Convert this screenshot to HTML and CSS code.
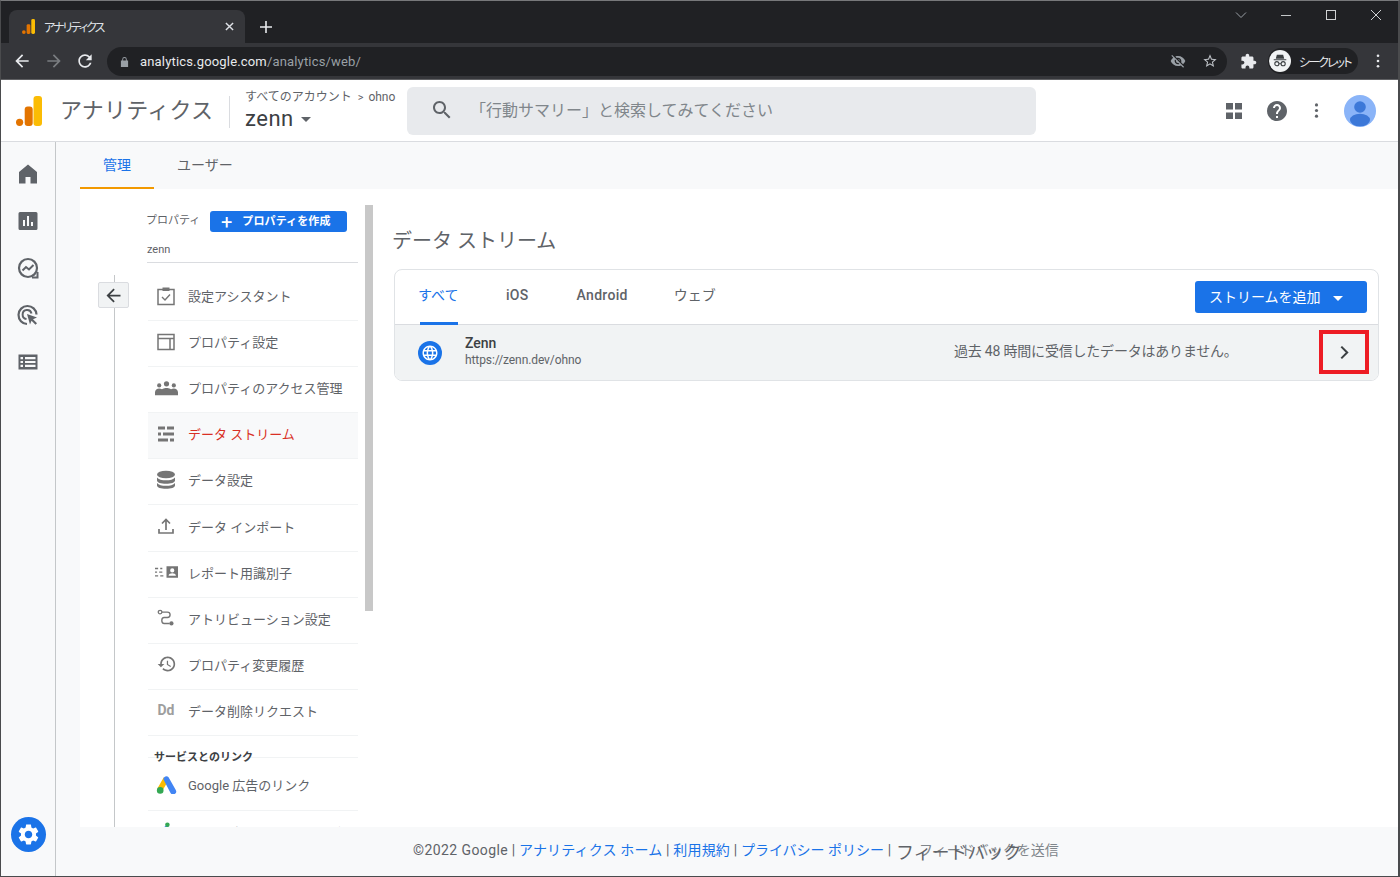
FILE: index.html
```html
<!DOCTYPE html>
<html lang="ja">
<head>
    <meta charset="UTF-8">
    <title>アナリティクス</title>
    <link rel="stylesheet" href="styles.css">
</head>
<body>
<div class="window">

<!-- browser chrome -->
<div class="tabstrip">
    <div class="tab">
        <svg class="tab-logo" viewBox="0 0 14 16"><rect x="10" y="0" width="4" height="16" rx="1.5" fill="#fbbc04"/><rect x="5" y="5.5" width="4" height="10.5" rx="1.5" fill="#e37400"/><circle cx="2" cy="14" r="2" fill="#e37400"/></svg>
        <span class="tab-title">アナリティクス</span>
        <svg class="tab-close" viewBox="0 0 10 10"><path d="M1 1l8 8M9 1l-8 8" stroke="#dee1e6" stroke-width="1.6"/></svg>
    </div>
    <svg class="new-tab" viewBox="0 0 12 12"><path d="M6 0v12M0 6h12" stroke="#e8eaed" stroke-width="1.6"/></svg>
    <div class="window-controls">
        <svg viewBox="0 0 12 12" class="win-chevron"><path d="M1 3.5l5 5 5-5" fill="none" stroke="#9aa0a6" stroke-width="1"/></svg>
        <svg viewBox="0 0 12 12"><path d="M1 6.5h10" stroke="#c4c7c9" stroke-width="1"/></svg>
        <svg viewBox="0 0 12 12"><rect x="1.5" y="1.5" width="9" height="9" fill="none" stroke="#d0d2d4" stroke-width="1"/></svg>
        <svg viewBox="0 0 12 12"><path d="M1 1l10 10M11 1L1 11" stroke="#d0d2d4" stroke-width="1"/></svg>
    </div>
</div>
<div class="toolbar">
    <svg class="tool-icon" viewBox="0 0 24 24"><path fill="#e8eaed" d="M20 11H7.83l5.59-5.59L12 4l-8 8 8 8 1.41-1.41L7.83 13H20v-2z"/></svg>
    <svg class="tool-icon" viewBox="0 0 24 24"><path fill="#7a7d81" d="M12 4l-1.41 1.41L16.17 11H4v2h12.17l-5.58 5.59L12 20l8-8z"/></svg>
    <svg class="tool-icon" viewBox="0 0 24 24"><path fill="#e8eaed" d="M17.65 6.35C16.2 4.9 14.21 4 12 4c-4.42 0-7.99 3.58-7.99 8s3.57 8 7.99 8c3.73 0 6.84-2.55 7.73-6h-2.08c-.82 2.33-3.04 4-5.65 4-3.31 0-6-2.69-6-6s2.69-6 6-6c1.66 0 3.14.69 4.22 1.78L13 11h7V4l-2.35 2.35z"/></svg>
    <div class="omnibox">
        <svg class="lock" viewBox="0 0 10 12"><path fill="#9aa0a6" d="M2.5 5V3.5a2.5 2.5 0 015 0V5H9v7H1V5zm1 0h3V3.5a1.5 1.5 0 00-3 0z"/></svg>
        <span class="url"><b>analytics.google.com</b>/analytics/web/</span>
        <svg class="omni-icon eye" viewBox="0 0 24 24"><path fill="#9aa0a6" d="M12 7c2.76 0 5 2.24 5 5 0 .65-.13 1.26-.36 1.83l2.92 2.92c1.51-1.26 2.7-2.89 3.43-4.75-1.73-4.39-6-7.5-11-7.5-1.4 0-2.74.25-3.98.7l2.16 2.16C10.74 7.13 11.35 7 12 7zM2 4.27l2.28 2.28.46.46C3.08 8.3 1.78 10.02 1 12c1.73 4.39 6 7.5 11 7.5 1.55 0 3.03-.3 4.38-.84l.42.42L19.73 22 21 20.73 3.27 3 2 4.27zM7.53 9.8l1.55 1.55c-.05.21-.08.43-.08.65 0 1.66 1.34 3 3 3 .22 0 .44-.03.65-.08l1.55 1.55c-.67.33-1.41.53-2.2.53-2.76 0-5-2.24-5-5 0-.79.2-1.53.53-2.2zm4.31-.78l3.15 3.15.02-.16c0-1.66-1.34-3-3-3l-.17.01z"/></svg>
        <svg class="omni-icon" viewBox="0 0 24 24"><path fill="#bdc1c6" d="M22 9.24l-7.19-.62L12 2 9.19 8.63 2 9.24l5.46 4.73L5.82 21 12 17.27 18.18 21l-1.63-7.03L22 9.24zM12 15.4l-3.76 2.27 1-4.28-3.32-2.88 4.38-.38L12 6.1l1.71 4.04 4.38.38-3.32 2.88 1 4.28L12 15.4z"/></svg>
    </div>
    <svg class="ext-icon" viewBox="0 0 24 24"><path fill="#e8eaed" d="M20.5 11H19V7c0-1.1-.9-2-2-2h-4V3.5C13 2.12 11.88 1 10.5 1S8 2.12 8 3.5V5H4c-1.1 0-1.99.9-1.99 2v3.8H3.5c1.49 0 2.7 1.21 2.7 2.7s-1.21 2.7-2.7 2.7H2V20c0 1.1.9 2 2 2h3.8v-1.5c0-1.49 1.21-2.7 2.7-2.7 1.49 0 2.7 1.21 2.7 2.7V22H17c1.1 0 2-.9 2-2v-4h1.5c1.38 0 2.5-1.12 2.5-2.5S21.88 11 20.5 11z"/></svg>
    <div class="incognito">
        <span class="incognito-badge">
            <svg viewBox="0 0 20 20"><path fill="#3c4043" d="M6.5 3h7l1.2 4.5H5.300zM3 8h14v1.200H3z"/><circle cx="6.500" cy="13" r="2.300" fill="none" stroke="#3c4043" stroke-width="1.200"/><circle cx="13.500" cy="13" r="2.300" fill="none" stroke="#3c4043" stroke-width="1.200"/><path d="M8.800 13h2.400" stroke="#3c4043" stroke-width="1"/></svg>
        </span>
        <span class="incognito-label">シークレット</span>
    </div>
    <svg class="kebab" viewBox="0 0 4 16"><circle cx="2" cy="2" r="1.500" fill="#e8eaed"/><circle cx="2" cy="8" r="1.500" fill="#e8eaed"/><circle cx="2" cy="14" r="1.500" fill="#e8eaed"/></svg>
</div>

<!-- analytics header -->
<header class="app-header">
    <svg class="logo" viewBox="0 0 26 30"><rect x="17.500" y="0" width="8.500" height="30" rx="3" fill="#fbbc04"/><rect x="8.700" y="10.500" width="8" height="19.500" rx="3" fill="#e37400"/><circle cx="3.600" cy="26.300" r="3.600" fill="#e37400"/></svg>
    <div class="product-name">アナリティクス</div>
    <div class="account">
        <div class="crumbs">すべてのアカウント <span class="crumb-sep">&gt;</span> ohno</div>
        <div class="property-name">zenn <span class="caret"></span></div>
    </div>
    <div class="search">
        <svg viewBox="0 0 24 24"><path fill="#5f6368" d="M15.500 14h-.79l-.28-.27C15.410 12.590 16 11.110 16 9.500 16 5.910 13.090 3 9.500 3S3 5.910 3 9.500 5.910 16 9.500 16c1.610 0 3.090-.59 4.230-1.570l.27.28v.79l5 4.990L20.490 19l-4.990-5zm-6 0C7.010 14 5 11.990 5 9.500S7.010 5 9.500 5 14 7.010 14 9.500 11.990 14 9.500 14z"/></svg>
        <span>「行動サマリー」と検索してみてください</span>
    </div>
    <div class="header-actions">
        <svg class="apps" viewBox="0 0 16 16"><path fill="#5f6368" d="M0 0h7v6.500H0zM9 0h7v6.500H9zM0 9.500h7V16H0zM9 9.500h7V16H9z"/></svg>
        <svg class="help" viewBox="2 2 20 20"><path fill="#5f6368" d="M12 2C6.480 2 2 6.480 2 12s4.480 10 10 10 10-4.480 10-10S17.520 2 12 2zm1 17h-2v-2h2v2zm2.070-7.750l-.9.920C13.450 12.900 13 13.500 13 15h-2v-.5c0-1.100.450-2.100 1.170-2.830l1.240-1.260c.370-.36.590-.86.590-1.410 0-1.100-.9-2-2-2s-2 .9-2 2H8c0-2.210 1.790-4 4-4s4 1.790 4 4c0 .880-.36 1.680-.93 2.250z"/></svg>
        <svg class="more" viewBox="0 0 4 16"><circle cx="2" cy="2" r="1.700" fill="#5f6368"/><circle cx="2" cy="8" r="1.700" fill="#5f6368"/><circle cx="2" cy="14" r="1.700" fill="#5f6368"/></svg>
        <svg class="avatar" viewBox="0 0 32 32"><circle cx="16" cy="16" r="16" fill="#8ab4f8"/><circle cx="16" cy="12" r="5.800" fill="#3c78d8"/><ellipse cx="16" cy="25" rx="10" ry="6.300" fill="#3c78d8"/></svg>
    </div>
</header>

<div class="app-body">
    <!-- left rail -->
    <nav class="rail">
        <svg viewBox="0 0 24 24"><path fill="#5f6368" d="M12 2.500L3 10v11.500h6.500V15h5v6.500H21V10z"/></svg>
        <svg viewBox="0 0 24 24"><path fill="#5f6368" fill-rule="evenodd" d="M4 3h16a1.500 1.500 0 011.500 1.500v15A1.500 1.500 0 0120 21H4a1.500 1.500 0 01-1.500-1.500v-15A1.500 1.500 0 014 3zm3 8v6h2v-6zm4-4v10h2V7zm4 6v4h2v-4z"/></svg>
        <svg viewBox="0 0 24 24"><circle cx="12" cy="12" r="9" fill="none" stroke="#5f6368" stroke-width="2.200"/><path d="M6.500 14.500l3.500-3.500 3 2.500 4.500-4.500" fill="none" stroke="#5f6368" stroke-width="2"/><path d="M16 21.500h5.500V16" fill="none" stroke="#5f6368" stroke-width="2"/></svg>
        <svg viewBox="0 0 24 24"><path d="M11 21a9 9 0 119.500-9.500" fill="none" stroke="#5f6368" stroke-width="2.200"/><path d="M10.500 16a4.500 4.500 0 115-5.500" fill="none" stroke="#5f6368" stroke-width="2"/><path fill="#5f6368" d="M11 11l10 3.500-4 1.800 4 4-1.500 1.500-4-4L14 21.500z"/></svg>
        <svg viewBox="0 0 24 24"><path fill="#5f6368" d="M2.500 4.500h19v15h-19zM4.500 7v2.200h2.500V7zm4.500 0v2.200h10.500V7zM4.500 10.900v2.200h2.500v-2.200zm4.500 0v2.200h10.500v-2.200zM4.500 14.800V17h2.500v-2.200zm4.500 0V17h10.500v-2.200z" fill-rule="evenodd"/></svg>
        <div class="rail-spacer"></div>
        <span class="gear">
            <svg viewBox="0 0 24 24"><path fill="#fff" d="M19.140 12.940c.04-.3.060-.61.060-.94 0-.32-.02-.64-.07-.94l2.030-1.580c.18-.14.230-.41.120-.61l-1.920-3.320c-.12-.22-.37-.29-.59-.22l-2.390.96c-.5-.38-1.030-.7-1.620-.94l-.36-2.540c-.04-.24-.24-.41-.48-.41h-3.840c-.24 0-.43.170-.47.410l-.36 2.540c-.59.240-1.130.570-1.620.940l-2.390-.96c-.22-.08-.47 0-.59.220L2.740 8.870c-.12.210-.08.470.120.610l2.030 1.580c-.05.3-.09.630-.09.940s.02.640.07.940l-2.030 1.580c-.18.140-.23.410-.12.610l1.920 3.320c.12.220.370.290.590.220l2.390-.96c.5.380 1.030.7 1.620.940l.36 2.540c.05.240.240.410.480.410h3.840c.24 0 .44-.17.470-.41l.36-2.540c.59-.24 1.130-.56 1.620-.94l2.390.96c.22.080.47 0 .59-.22l1.920-3.320c.12-.22.070-.47-.12-.61l-2.010-1.580zM12 15.600c-1.980 0-3.600-1.620-3.600-3.600s1.620-3.600 3.600-3.600 3.600 1.620 3.600 3.600-1.620 3.600-3.600 3.600z"/></svg>
        </span>
    </nav>

    <div class="content">
        <div class="page-tabs">
            <div class="page-tab active">管理</div>
            <div class="page-tab">ユーザー</div>
        </div>

        <div class="admin">
            <div class="gutter">
                <div class="back-btn">
                    <svg viewBox="0 0 24 24"><path fill="#3c4043" d="M20 11H7.830l5.590-5.590L12 4l-8 8 8 8 1.410-1.410L7.830 13H20v-2z"/></svg>
                </div>
            </div>

            <div class="panel">
                <div class="panel-head">
                    <span class="panel-label">プロパティ</span>
                    <button class="create-btn"><span class="plus">+</span><span class="create-label">プロパティを作成</span></button>
                </div>
                <div class="panel-name">zenn</div>

                <div class="menu-item">
                    <span class="menu-icon"><svg viewBox="0 0 20 20"><path d="M2 3.500h16v15H2z" fill="none" stroke="#757575" stroke-width="1.500"/><path d="M6.500 1.500h7v3.500h-7z" fill="#757575"/><path d="M6 11l3 3 5-5.500" fill="none" stroke="#757575" stroke-width="1.400"/></svg></span>
                    設定アシスタント
                </div>
                <div class="menu-item">
                    <span class="menu-icon"><svg viewBox="0 0 20 20"><path d="M2 2.500h16v15H2zM2 6.500h16M14 6.500v11" fill="none" stroke="#757575" stroke-width="1.500"/></svg></span>
                    プロパティ設定
                </div>
                <div class="menu-item">
                    <span class="menu-icon"><svg class="wide" viewBox="0 0 22 14"><g fill="#757575"><circle cx="4" cy="4.500" r="2"/><circle cx="11" cy="3" r="2.500"/><circle cx="18" cy="4.500" r="2"/><path d="M0 14v-3c0-2 2-3.500 4-3.500s3.500 1 3.500 3V14zM6 14v-3.500C6 8 8.500 7 11 7s5 1 5 3.500V14zM14.500 14v-3.500c0-2 1.500-3 3.500-3s4 1.500 4 3.500v3z"/></g></svg></span>
                    プロパティのアクセス管理
                </div>
                <div class="menu-item current">
                    <span class="menu-icon"><svg viewBox="0 0 20 20"><g fill="#757575"><path d="M2 2.500h7v3H2zM11 2.500h7v3h-7zM2 8.500h3v3H2zM7 8.500h11v3H7zM2 14.500h10v3H2zM14 14.500h4v3h-4z"/></g></svg></span>
                    データ ストリーム
                </div>
                <div class="menu-item">
                    <span class="menu-icon"><svg viewBox="0 0 20 20"><g fill="#757575"><ellipse cx="10" cy="4.500" rx="9" ry="3.800"/><path d="M1 7.500c1.500 2 5 2.800 9 2.800s7.500-.8 9-2.800v3c0 2-4 3.300-9 3.300s-9-1.300-9-3.300zM1 13c1.500 2 5 2.800 9 2.800s7.500-.8 9-2.800v2.500c0 2-4 3.300-9 3.300s-9-1.300-9-3.300z"/></g></svg></span>
                    データ設定
                </div>
                <div class="menu-item">
                    <span class="menu-icon"><svg viewBox="0 0 20 20"><path d="M10 14V4M6 7.500L10 3.500l4 4M3 13v4h14v-4" fill="none" stroke="#757575" stroke-width="1.700"/></svg></span>
                    データ インポート
                </div>
                <div class="menu-item">
                    <span class="menu-icon"><svg class="wide" viewBox="0 0 22 12"><g fill="#757575"><path d="M0 2h3v1.300H0zM5 2h2v1.300H5zM0 5.500h2v1.300H0zM4 5.500h3v1.300H4zM0 9h3v1.300H0zM5 9h3v1.300H5z"/><path fill-rule="evenodd" d="M11 .5h11v11H11zm5.500 2a2 2 0 100 4 2 2 0 000-4zM13 9.500h7c0-1.500-2-2.200-3.500-2.200S13 8 13 9.500z"/></g></svg></span>
                    レポート用識別子
                </div>
                <div class="menu-item">
                    <span class="menu-icon"><svg viewBox="-1 -1 22 22"><circle cx="3.500" cy="3.500" r="2" fill="none" stroke="#757575" stroke-width="1.400"/><circle cx="16" cy="16" r="2.300" fill="#757575"/><path d="M5.500 3.500h6c4 0 4 6 0 6H8c-3.500 0-3.500 6.500 0 6.500h6" fill="none" stroke="#757575" stroke-width="1.500"/></svg></span>
                    アトリビューション設定
                </div>
                <div class="menu-item">
                    <span class="menu-icon"><svg viewBox="-1 0 24 24"><path fill="#757575" d="M13 3c-4.970 0-9 4.030-9 9H1l3.890 3.890.070.140L9 12H6c0-3.870 3.130-7 7-7s7 3.130 7 7-3.130 7-7 7c-1.930 0-3.680-.79-4.940-2.060l-1.420 1.420C8.270 19.990 10.510 21 13 21c4.970 0 9-4.030 9-9s-4.030-9-9-9zm-1 5v5l4.280 2.540.72-1.210-3.500-2.080V8H12z"/></svg></span>
                    プロパティ変更履歴
                </div>
                <div class="menu-item">
                    <span class="menu-icon dd">Dd</span>
                    データ削除リクエスト
                </div>

                <div class="menu-section"><span>サービスとのリンク</span></div>

                <div class="menu-item">
                    <span class="menu-icon"><svg class="wide" viewBox="0 0 22 20"><path fill="#fbbc04" d="M8 1.500L1 13.500l5 3.500L12 7z"/><path fill="#4285f4" d="M7.500 3.500a3.300 3.300 0 015.800-2l8 14a3.300 3.300 0 01-5.800 3.300z"/><circle cx="4" cy="16" r="3.700" fill="#34a853"/></svg></span>
                    Google 広告のリンク
                </div>
                <div class="menu-item">
                    <span class="menu-icon"><svg class="wide" viewBox="0 0 22 20"><path fill="#4285f4" d="M1 14L11 3l3 3L5 17z"/><circle cx="12" cy="3" r="2.500" fill="#34a853"/><path fill="#fbbc04" d="M14 6l6 8-3 3-6-8z"/></svg></span>
                    アド マネージャーのリンク
                </div>
            </div>

            <div class="scrollbar-track"><div class="scrollbar-thumb"></div></div>

            <main class="streams">
                <h1>データ ストリーム</h1>
                <div class="card">
                    <div class="card-top">
                        <div class="stream-tab active">すべて</div>
                        <div class="stream-tab ios">iOS</div>
                        <div class="stream-tab android">Android</div>
                        <div class="stream-tab web">ウェブ</div>
                        <button class="add-btn"><span class="add-label">ストリームを追加</span><span class="caret light"></span></button>
                    </div>
                    <div class="stream-row">
                        <span class="globe"><svg viewBox="0 0 24 24"><path fill="#fff" d="M11.990 2C6.470 2 2 6.480 2 12s4.470 10 9.990 10C17.520 22 22 17.520 22 12S17.520 2 11.990 2zm6.930 6h-2.950c-.32-1.250-.78-2.450-1.380-3.560 1.840.63 3.370 1.910 4.330 3.560zM12 4.040c.83 1.200 1.480 2.530 1.910 3.960h-3.820c.43-1.430 1.080-2.760 1.910-3.960zM4.260 14C4.100 13.360 4 12.690 4 12s.1-1.360.26-2h3.380c-.08.66-.14 1.320-.14 2 0 .68.06 1.340.14 2H4.260zm.82 2h2.950c.32 1.250.78 2.450 1.380 3.560-1.840-.63-3.370-1.900-4.330-3.560zm2.950-8H5.080c.96-1.660 2.490-2.930 4.330-3.560C8.810 5.550 8.350 6.750 8.030 8zM12 19.960c-.83-1.200-1.480-2.530-1.910-3.960h3.820c-.43 1.430-1.080 2.760-1.910 3.960zM14.340 14H9.660c-.09-.66-.16-1.320-.16-2 0-.68.07-1.350.16-2h4.680c.09.650.16 1.320.16 2 0 .68-.07 1.340-.16 2zm.25 5.560c.6-1.110 1.060-2.310 1.380-3.560h2.950c-.96 1.650-2.490 2.930-4.330 3.560zM16.360 14c.08-.66.14-1.320.14-2 0-.68-.06-1.340-.14-2h3.380c.16.640.26 1.310.26 2s-.1 1.360-.26 2h-3.380z"/></svg></span>
                        <div class="stream-info">
                            <div class="stream-name">Zenn</div>
                            <div class="stream-url">https://zenn.dev/ohno</div>
                        </div>
                        <div class="stream-status">過去 48 時間に受信したデータはありません。</div>
                        <div class="chevron-box">
                            <svg viewBox="0 0 10 14"><path d="M2 1.500L7.500 7 2 12.500" fill="none" stroke="#3c4043" stroke-width="1.900"/></svg>
                        </div>
                    </div>
                </div>
            </main>
        </div>

        <footer class="footer">
            <span><span class="copy">©2022 Google</span> | <a>アナリティクス ホーム</a> | <a>利用規約</a> | <a class="policy">プライバシー ポリシー</a> | </span>
            <span class="feedback">フィードバックを送信<span class="feedback-over">フィードバック</span></span>
        </footer>
    </div>
</div>

</div>
</body>
</html>
```

FILE: styles.css
```css
* {
    box-sizing: border-box;
}
html, body {
    margin: 0;
    padding: 0;
    height: 100%;
    overflow: hidden;
}
body {
    font-family: Roboto, "Noto Sans CJK JP", sans-serif;
    color: #5f6368;
}
svg {
    display: block;
    flex-shrink: 0;
}
.window {
    width: 1400px;
    height: 877px;
    display: flex;
    flex-direction: column;
    border: 1px solid #4a4b4d;
    border-top-color: #77787a;
    border-right-width: 2px;
    background: #fff;
    overflow: hidden;
}

/* Browser chrome */
.tabstrip {
    height: 42px;
    flex-shrink: 0;
    background: #202124;
    display: flex;
    align-items: flex-end;
    padding-left: 8px;
}
.tab {
    width: 236px;
    height: 33px;
    background: #35363a;
    border-radius: 8px 8px 0 0;
    display: flex;
    align-items: center;
    padding: 0 10px 0 13px;
    color: #dee1e6;
    font-size: 12px;
}
.tab-logo {
    width: 13px;
    height: 15px;
}
.tab-title {
    margin-left: 9px;
    flex: 1;
    font-feature-settings: "palt";
    letter-spacing: -1.9px;
    white-space: nowrap;
}
.tab-close {
    width: 9px;
    height: 9px;
    margin-right: 1px;
}
.new-tab {
    width: 12px;
    height: 12px;
    margin: 0 0 10px 15px;
}
.window-controls {
    margin-left: auto;
    align-self: flex-start;
    display: flex;
    gap: 33px;
    padding: 8px 16px 0 0;
}
.window-controls svg {
    width: 12px;
    height: 12px;
}
.toolbar {
    height: 37px;
    flex-shrink: 0;
    background: #35363a;
    border-bottom: 1px solid #5f6063;
    display: flex;
    align-items: center;
    padding-left: 11px;
}
.tool-icon {
    width: 20px;
    height: 20px;
    margin-right: 11px;
}
.tool-icon:first-child {
    margin-right: 12px;
}
.omnibox {
    width: 1120px;
    height: 29px;
    margin-left: 1px;
    background: #202124;
    border-radius: 15px;
    display: flex;
    align-items: center;
    padding: 0 9px 0 13px;
    font-size: 13px;
    letter-spacing: .17px;
    color: #9aa0a6;
}
.lock {
    width: 9px;
    height: 11px;
}
.url {
    margin-left: 11px;
    flex: 1;
}
.url b {
    font-weight: 400;
    color: #e8eaed;
}
.omni-icon {
    width: 16px;
    height: 16px;
    margin-left: 16px;
}
.ext-icon {
    width: 17px;
    height: 17px;
    margin-left: 13px;
}
.incognito {
    width: 90px;
    height: 26px;
    margin-left: 11px;
    background: #202124;
    border-radius: 13px;
    display: flex;
    align-items: center;
    gap: 8px;
    padding-left: 1px;
    font-size: 12px;
    color: #e8eaed;
}
.incognito-label {
    font-feature-settings: "palt";
    letter-spacing: -1.9px;
    white-space: nowrap;
}
.incognito-badge {
    width: 22px;
    height: 22px;
    border-radius: 50%;
    background: #f1f3f4;
    display: flex;
    align-items: center;
    justify-content: center;
}
.incognito-badge svg {
    width: 18px;
    height: 18px;
}
.kebab {
    width: 4px;
    height: 14px;
    margin-left: 18px;
}

/* Analytics header */
.app-header {
    height: 62px;
    flex-shrink: 0;
    border-bottom: 1px solid #dadce0;
    background: #fff;
    display: flex;
    align-items: center;
    padding-left: 15px;
}
.logo {
    width: 26px;
    height: 30px;
}
.product-name {
    width: 169px;
    margin: -6px 0 0 18px;
    font-size: 22px;
    letter-spacing: .25px;
    color: #5f6368;
    white-space: nowrap;
}
.account {
    height: 32px;
    border-left: 1px solid #dadce0;
    padding-left: 15px;
    width: 178px;
    display: flex;
    flex-direction: column;
    margin-top: 2px;
}
.crumbs {
    font-size: 12px;
    line-height: 15px;
    margin-top: -6px;
    white-space: nowrap;
}
.crumb-sep {
    font-size: 11px;
    margin: 0 2px 0 3px;
}
.property-name {
    font-size: 22px;
    letter-spacing: .5px;
    line-height: 25px;
    margin-top: 1px;
    color: #3c4043;
    display: flex;
    align-items: center;
    gap: 7px;
}
.caret {
    width: 0;
    height: 0;
    border-left: 5px solid transparent;
    border-right: 5px solid transparent;
    border-top: 5px solid #5f6368;
    margin-top: 3px;
}
.caret.light {
    border-top-color: #fff;
    margin: 2px 0 0 12px;
}
.search {
    width: 629px;
    height: 48px;
    background: #e8eaed;
    border-radius: 6px;
    display: flex;
    align-items: center;
    padding-left: 23px;
    font-size: 16px;
    color: #80868b;
}
.search svg {
    width: 24px;
    height: 24px;
    margin: -1px 16px 0 0;
}
.search span {
    margin-top: -4px;
}
.header-actions {
    margin-left: auto;
    display: flex;
    align-items: center;
    padding-right: 22px;
}
.apps {
    width: 16px;
    height: 16px;
}
.help {
    width: 20px;
    height: 20px;
    margin-left: 25px;
}
.more {
    width: 5px;
    height: 15px;
    margin-left: 27px;
}
.avatar {
    width: 32px;
    height: 32px;
    margin-left: 25px;
}

/* Body */
.app-body {
    flex: 1;
    display: flex;
    min-height: 0;
}
.rail {
    width: 55px;
    flex-shrink: 0;
    background: #f8f9fa;
    border-right: 1px solid #c4c7c9;
    display: flex;
    flex-direction: column;
    align-items: center;
    padding-top: 20px;
    gap: 23px;
}
.rail > svg {
    width: 24px;
    height: 24px;
}
.rail-spacer {
    flex: 1;
}
.gear {
    width: 35px;
    height: 35px;
    border-radius: 50%;
    background: #1a73e8;
    display: flex;
    align-items: center;
    justify-content: center;
    margin: -16px 0 24px;
}
.gear svg {
    width: 25px;
    height: 25px;
}
.content {
    flex: 1;
    min-width: 0;
    background: #f8f9fa;
    display: flex;
    flex-direction: column;
}
.page-tabs {
    height: 47px;
    flex-shrink: 0;
    display: flex;
    padding-left: 24px;
}
.page-tab {
    padding: 0 23px;
    line-height: 46px;
    font-size: 14px;
}
.page-tab.active {
    width: 74px;
    color: #1a73e8;
    border-bottom: 2px solid #f29900;
}
.admin {
    flex: 1;
    min-height: 0;
    margin-left: 24px;
    background: #fff;
    display: flex;
    overflow: hidden;
}

/* Property menu */
.gutter {
    width: 67px;
    flex-shrink: 0;
    position: relative;
}
.gutter::before {
    content: "";
    display: block;
    width: 1px;
    height: 100%;
    margin: 86px 0 0 34px;
    background: #c4c7c9;
}
.back-btn {
    position: absolute;
    left: 18px;
    top: 93px;
    width: 31px;
    height: 26px;
    background: #f1f3f4;
    border: 1px solid #dadce0;
    border-radius: 2px;
    display: flex;
    align-items: center;
    justify-content: center;
}
.back-btn svg {
    width: 21px;
    height: 21px;
}
.panel {
    width: 211px;
    flex-shrink: 0;
    padding-top: 22px;
    font-size: 13px;
}
.panel-head {
    display: flex;
    align-items: center;
    justify-content: space-between;
    height: 21px;
    margin-right: 11px;
}
.panel-label {
    font-size: 11px;
    margin: -5px 0 0 -1px;
}
.create-btn {
    width: 137px;
    height: 21px;
    border: 0;
    padding: 0 0 0 11px;
    background: #1a73e8;
    border-radius: 3px;
    color: #fff;
    font: 700 11px Roboto, "Noto Sans CJK JP", sans-serif;
    display: flex;
    align-items: center;
}
.plus {
    font-size: 20px;
    font-weight: 400;
    line-height: 20px;
    margin-right: 10px;
}
.create-label {
    margin-top: -3px;
    letter-spacing: .1px;
}
.panel-name {
    height: 31px;
    line-height: 36px;
    font-size: 11px;
    border-bottom: 1px solid #dadce0;
    margin-bottom: 12px;
}
.menu-item {
    height: 46.1px;
    margin-left: 1px;
    padding-bottom: 4px;
    border-bottom: 1px solid #f1f3f4;
    display: flex;
    align-items: center;
    white-space: nowrap;
}
.menu-item.current {
    background: #f8f9fa;
    color: #d93025;
}
.menu-icon {
    width: 40px;
    flex-shrink: 0;
    display: flex;
    justify-content: center;
    padding-right: 4px;
}
.menu-icon svg {
    width: 20px;
    height: 20px;
}
.menu-icon svg.wide {
    width: 23px;
    height: 18px;
}
.menu-icon.dd {
    font-size: 14px;
    font-weight: 700;
    color: #9e9e9e;
}
.menu-section {
    height: 28.5px;
    margin-left: 1px;
    padding: 12px 0 0 6px;
    font-size: 11px;
    line-height: 20px;
    font-weight: 700;
    color: #3c4043;
    background: linear-gradient(#f1f3f4, #f1f3f4) 0 21px / 100% 1px no-repeat;
}
.scrollbar-track {
    width: 8px;
    flex-shrink: 0;
    margin: 16px 0 0 7px;
}
.scrollbar-thumb {
    height: 406px;
    background: #c8c8c8;
}

/* Stream list */
.streams {
    flex: 1;
    min-width: 0;
    padding: 0 19px 0 21px;
}
.streams h1 {
    margin: 37px 0 13px -2px;
    font-size: 20px;
    line-height: 30px;
    font-weight: 400;
    color: #5f6368;
}
.card {
    border: 1px solid #e0e3e6;
    border-radius: 8px;
    overflow: hidden;
}
.card-top {
    height: 55px;
    display: flex;
    align-items: center;
    padding-right: 11px;
    font-size: 14px;
    border-bottom: 1px solid #dadce0;
}
.stream-tab {
    height: 55px;
    line-height: 50px;
    white-space: nowrap;
}
.stream-tab.active {
    margin-left: 25px;
    width: 38px;
    text-indent: -2px;
    color: #1a73e8;
    box-shadow: inset 0 -3px 0 #1a73e8;
}
.stream-tab.ios {
    margin-left: 48px;
    font-weight: 500;
    letter-spacing: .3px;
}
.stream-tab.android {
    margin-left: 48px;
    font-weight: 500;
    letter-spacing: .3px;
}
.stream-tab.web {
    margin-left: 46px;
}
.add-btn {
    margin-left: auto;
    width: 172px;
    height: 32px;
    border: 0;
    padding: 0 0 0 14px;
    background: #1a73e8;
    border-radius: 3px;
    color: #fff;
    font: 14px Roboto, "Noto Sans CJK JP", sans-serif;
    display: flex;
    align-items: center;
}
.add-label {
    margin-top: -3px;
}
.stream-row {
    height: 55px;
    background: #f1f3f4;
    display: flex;
    align-items: center;
    padding-left: 23px;
    position: relative;
}
.globe {
    width: 24px;
    height: 24px;
    border-radius: 50%;
    background: #1a73e8;
    display: flex;
    align-items: center;
    justify-content: center;
}
.globe svg {
    width: 18px;
    height: 18px;
}
.stream-info {
    margin-left: 23px;
    width: 489px;
    margin-top: -3px;
}
.stream-name {
    font-size: 14px;
    line-height: 17px;
    font-weight: 500;
    color: #3c4043;
}
.stream-url {
    font-size: 12px;
    line-height: 15px;
    letter-spacing: -.1px;
    margin-top: 1px;
}
.stream-status {
    font-size: 14px;
    letter-spacing: -.2px;
    color: #5f6368;
    white-space: nowrap;
    margin-top: -6px;
}
.chevron-box {
    position: absolute;
    right: 9px;
    top: 5px;
    width: 50px;
    height: 44px;
    border: 4px solid #ed1c24;
    display: flex;
    align-items: center;
    justify-content: center;
}
.chevron-box svg {
    width: 11px;
    height: 15px;
}

/* Footer */
.footer {
    height: 49px;
    flex-shrink: 0;
    padding: 13px 0 0 357px;
    font-size: 14px;
    line-height: 20px;
    letter-spacing: .17px;
    white-space: pre;
    display: flex;
}
.footer a {
    color: #1a73e8;
}
.copy {
    letter-spacing: .42px;
}
.footer a.policy {
    letter-spacing: 0;
}
.feedback {
    position: relative;
    margin-left: 24px;
    color: #80868b;
    letter-spacing: 0;
}
.feedback-over {
    position: absolute;
    left: -23px;
    top: 3px;
    font-size: 18px;
    color: #5f6368;
}
```
